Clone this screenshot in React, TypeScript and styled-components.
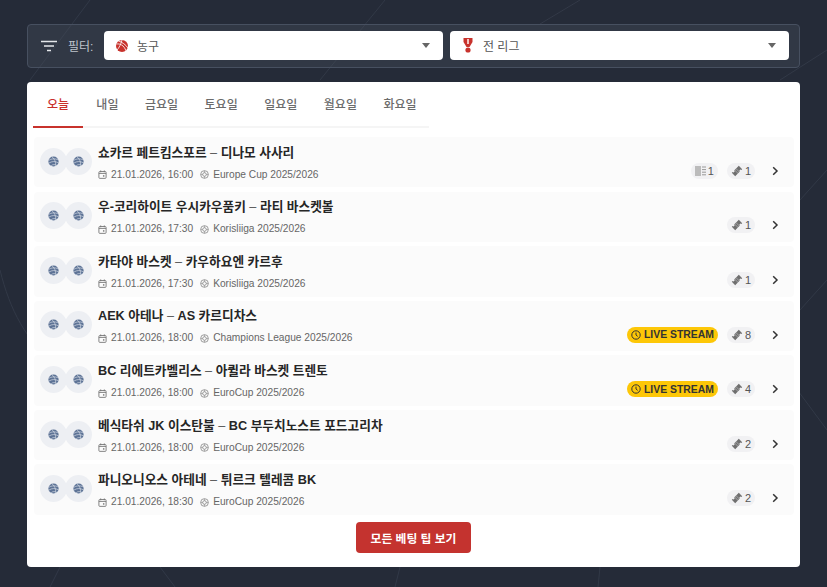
import React from 'react';
import styled, { createGlobalStyle } from 'styled-components';

const Global = createGlobalStyle`
  html, body { margin: 0; padding: 0; background: #252b38; }
  body { font-family: "Liberation Sans", "Noto Sans CJK KR", sans-serif; }
  * { box-sizing: border-box; }
`;

const Page = styled.div`
  position: relative;
  width: 827px;
  height: 587px;
  overflow: hidden;
  padding: 24px 27px 0;
  background: #252b38;
`;
const Backdrop = styled.svg`
  position: absolute;
  inset: 0;
  width: 827px;
  height: 587px;
`;
const Content = styled.div`
  position: relative;
  display: flex;
  flex-direction: column;
  gap: 14px;
`;
const FilterBar = styled.div`
  display: flex;
  align-items: center;
  height: 44px;
  padding: 0 10px 1px 12px;
  border: 1px solid #475060;
  border-radius: 4px;
  background: rgba(70, 78, 93, 0.38);
`;
const FilterIcon = styled.svg`
  width: 18px;
  height: 14px;
  margin-right: 10px;
`;
const FilterLabel = styled.span`
  font-size: 12px;
  color: #bfc4cc;
  width: 36px;
`;
const Selects = styled.div`
  display: flex;
  gap: 7px;
  flex: 1;
`;
const Select = styled.div`
  flex: 1;
  height: 29px;
  display: flex;
  align-items: center;
  padding: 0 13px 0 11px;
  background: #fff;
  border-radius: 4px;
  font-size: 12px;
  color: #555;
  gap: 8px;
`;
const SelectText = styled.span`
  flex: 1;
`;
const Caret = styled.span`
  width: 0;
  height: 0;
  border-left: 4.5px solid transparent;
  border-right: 4.5px solid transparent;
  border-top: 5px solid #666;
`;
const Card = styled.div`
  background: #fff;
  border-radius: 4px;
  height: 485px;
  padding: 0 6px;
  display: flex;
  flex-direction: column;
`;
const Tabs = styled.div`
  display: flex;
  width: 396px;
  height: 46px;
  border-bottom: 2px solid #f5f5f5;
  flex-shrink: 0;
`;
const Tab = styled.div<{ $active?: boolean }>`
  height: 46px;
  padding: 0 ${p => (p.$active ? '14px' : '13.25px')} 2px;
  display: flex;
  align-items: center;
  justify-content: center;
  white-space: nowrap;
  font-size: 12px;
  font-weight: 500;
  color: ${p => (p.$active ? '#c9302c' : '#6b6b6b')};
  border-bottom: 2px solid ${p => (p.$active ? '#c8322c' : 'transparent')};
`;
const Rows = styled.div`
  display: flex;
  flex-direction: column;
  gap: 4.2px;
  margin-top: 9px;
  padding-left: 1px;
`;
const Row = styled.div`
  height: 50.4px;
  display: flex;
  align-items: center;
  background: #fbfbfb;
  padding: 0 14px 0 6px;
  border-radius: 4px;
`;
const Logos = styled.div`
  display: flex;
  width: 58px;
  flex-shrink: 0;
  margin-top: -2px;
`;
const Logo = styled.div`
  width: 27px;
  height: 27px;
  border-radius: 50%;
  background: #edeff3;
  display: flex;
  align-items: center;
  justify-content: center;
  &:nth-child(2) { margin-left: -2px; }
`;
const Info = styled.div`
  flex: 1;
  display: flex;
  flex-direction: column;
  gap: 6px;
  min-width: 0;
  padding-top: 1px;
`;
const Title = styled.div`
  font-size: 12.7px;
  font-weight: 700;
  line-height: 18px;
  color: #262626;
`;
const Dash = styled.span`
  font-weight: 400;
  color: #555;
`;
const Meta = styled.div`
  display: flex;
  align-items: center;
  font-size: 10.2px;
  line-height: 14px;
  color: #666;
`;
const MetaItem = styled.span`
  display: inline-flex;
  align-items: center;
  gap: 4px;
  margin-right: 7px;
`;
const Right = styled.div`
  display: flex;
  align-items: center;
  align-self: flex-end;
  height: 34px;
  padding-top: 1px;
`;
const LiveBadge = styled.span`
  display: inline-flex;
  align-items: center;
  gap: 3px;
  height: 16px;
  padding: 0 4px;
  border-radius: 8px;
  background: #fdc707;
  color: #333;
  font-size: 10.4px;
  font-weight: 700;
`;
const Count = styled.span`
  display: inline-flex;
  align-items: center;
  gap: 2px;
  height: 16px;
  padding: 0 4px;
  border-radius: 8px;
  background: #f1f1f3;
  color: #555;
  font-size: 11px;
  margin-left: 9px;
  &:first-child { margin-left: 0; }
`;
const ChevronBox = styled.svg`
  width: 10px;
  height: 10px;
  margin-left: 15px;
`;
const Footer = styled.div`
  display: flex;
  justify-content: center;
  margin-top: 7px;
`;
const Button = styled.div`
  width: 115px;
  height: 31px;
  display: flex;
  align-items: center;
  justify-content: center;
  background: #c4332f;
  color: #fff;
  font-size: 11.8px;
  font-weight: 700;
  border-radius: 4px;
`;

const Ball = () => (
  <svg width="11" height="11" viewBox="0 0 14 14">
    <circle cx="7" cy="7" r="6.5" fill="#5d7396" />
    <path d="M1 5.5C4 3.5 8 3 12.5 4.5M1.2 9C5 6.5 9 6.5 13 8.5M4 12.5C6 10.5 9 10.5 11 12M5 1C8 3 10 7 10 13" stroke="#dfe4ec" strokeWidth="0.8" fill="none" />
  </svg>
);
const CalIcon = () => (
  <svg width="9" height="9" viewBox="0 0 10 10" fill="none" stroke="#777" strokeWidth="1">
    <rect x="1" y="1.7" width="8" height="7.6" rx="1" />
    <path d="M1 3.8h8M3 .5v2M7 .5v2" />
    <rect x="5.5" y="5.8" width="1.6" height="1.6" fill="#777" stroke="none" />
  </svg>
);
const LeagueIcon = () => (
  <svg width="9" height="9" viewBox="0 0 10 10" fill="none" stroke="#888" strokeWidth="0.9">
    <circle cx="5" cy="5" r="4.3" />
    <circle cx="5" cy="5" r="2" />
    <path d="M1 5h2M7 5h2M5 1v2M5 7v2" strokeWidth="0.7" />
  </svg>
);
const TicketIcon = () => (
  <svg width="12" height="12" viewBox="0 0 12 12">
    <path d="M7.8 .8 L11.2 4.2 L10.4 5 A1.1 1.1 0 0 0 8.8 6.6 L4.2 11.2 L.8 7.8 L1.6 7 A1.1 1.1 0 0 0 3.2 5.4 Z" fill="#6f6f6f" />
    <path d="M5 3.6l3.4 3.4M3.6 5l3.4 3.4" stroke="#c9c9cc" strokeWidth="0.6" />
  </svg>
);
const StatsIcon = () => (
  <svg width="11" height="10" viewBox="0 0 11 10">
    <rect x="0" y="0" width="6" height="10" fill="#bbb" />
    <path d="M7 1h4M7 3.6h4M7 6.2h4M7 8.8h4" stroke="#999" strokeWidth="1" />
  </svg>
);
const ClockIcon = () => (
  <svg width="10" height="10" viewBox="0 0 10 10" fill="none" stroke="#333" strokeWidth="1">
    <circle cx="5" cy="5" r="4.2" />
    <path d="M5 2.6V5l1.7 1.4" />
  </svg>
);
const Chevron = () => (
  <ChevronBox viewBox="0 0 10 10">
    <path d="M3.2 1.2L7 5L3.2 8.8" fill="none" stroke="#333" strokeWidth="1.5" />
  </ChevronBox>
);

type Match = { title: [string, string]; time: string; league: string; live?: boolean; stats?: number; tips: number };
const matches: Match[] = [
  { title: ['쇼카르 페트킴스포르', '디나모 사사리'], time: '21.01.2026, 16:00', league: 'Europe Cup 2025/2026', stats: 1, tips: 1 },
  { title: ['우-코리하이트 우시카우품키', '라티 바스켓볼'], time: '21.01.2026, 17:30', league: 'Korisliiga 2025/2026', tips: 1 },
  { title: ['카타야 바스켓', '카우하요엔 카르후'], time: '21.01.2026, 17:30', league: 'Korisliiga 2025/2026', tips: 1 },
  { title: ['AEK 아테나', 'AS 카르디차스'], time: '21.01.2026, 18:00', league: 'Champions League 2025/2026', live: true, tips: 8 },
  { title: ['BC 리에트카벨리스', '아퀼라 바스켓 트렌토'], time: '21.01.2026, 18:00', league: 'EuroCup 2025/2026', live: true, tips: 4 },
  { title: ['베식타쉬 JK 이스탄불', 'BC 부두치노스트 포드고리차'], time: '21.01.2026, 18:00', league: 'EuroCup 2025/2026', tips: 2 },
  { title: ['파니오니오스 아테네', '튀르크 텔레콤 BK'], time: '21.01.2026, 18:30', league: 'EuroCup 2025/2026', tips: 2 },
];
const tabs = ['오늘', '내일', '금요일', '토요일', '일요일', '월요일', '화요일'];

export default function App() {
  return (
    <Page>
      <Global />
      <Backdrop viewBox="0 0 827 587" fill="none" stroke="#323947" strokeWidth="1">
        <path d="M385 0L320 80M90 0L30 80M580 0L540 24M827 50L780 80M0 270C10 310 25 340 60 370M827 430L790 380M827 280L800 310M800 200L827 170M160 567L175 587M600 567L598 587M60 567L50 587M400 567L395 587" />
      </Backdrop>
      <Content>
        <FilterBar>
          <FilterIcon viewBox="0 0 18 14">
            <path d="M1 2.5h16M4 7h10M7 11.5h4" stroke="#e4e6ea" strokeWidth="1.6" fill="none" />
          </FilterIcon>
          <FilterLabel>필터:</FilterLabel>
          <Selects>
            <Select>
              <svg width="14" height="14" viewBox="0 0 14 14">
                <circle cx="7" cy="7" r="6" fill="#c8322c" />
                <path d="M1.5 5C5 4.5 9 6 11 12M3.5 2C7 3 11 6 13 9M7 1C6 5 4 9 2 11" stroke="#fff" strokeWidth="0.8" fill="none" />
              </svg>
              <SelectText>농구</SelectText>
              <Caret />
            </Select>
            <Select>
              <svg width="14" height="15" viewBox="0 0 14 15">
                <path d="M2.5 0h9v4L8.5 9h-3L2.5 4z" fill="#c8322c" />
                <path d="M6 1h2v5H6z" fill="#f3c6c4" />
                <circle cx="7" cy="12" r="2.6" fill="#c8322c" />
              </svg>
              <SelectText>전 리그</SelectText>
              <Caret />
            </Select>
          </Selects>
        </FilterBar>
        <Card>
          <Tabs>
            {tabs.map((t, i) => (
              <Tab key={t} $active={i === 0}>{t}</Tab>
            ))}
          </Tabs>
          <Rows>
            {matches.map(m => (
              <Row key={m.title[0]}>
                <Logos>
                  <Logo><Ball /></Logo>
                  <Logo><Ball /></Logo>
                </Logos>
                <Info>
                  <Title>{m.title[0]} <Dash>–</Dash> {m.title[1]}</Title>
                  <Meta>
                    <MetaItem><CalIcon />{m.time}</MetaItem>
                    <MetaItem><LeagueIcon />{m.league}</MetaItem>
                  </Meta>
                </Info>
                <Right>
                  {m.live && <LiveBadge><ClockIcon />LIVE STREAM</LiveBadge>}
                  {m.stats !== undefined && <Count><StatsIcon />{m.stats}</Count>}
                  <Count><TicketIcon />{m.tips}</Count>
                  <Chevron />
                </Right>
              </Row>
            ))}
          </Rows>
          <Footer><Button>모든 베팅 팁 보기</Button></Footer>
        </Card>
      </Content>
    </Page>
  );
}
